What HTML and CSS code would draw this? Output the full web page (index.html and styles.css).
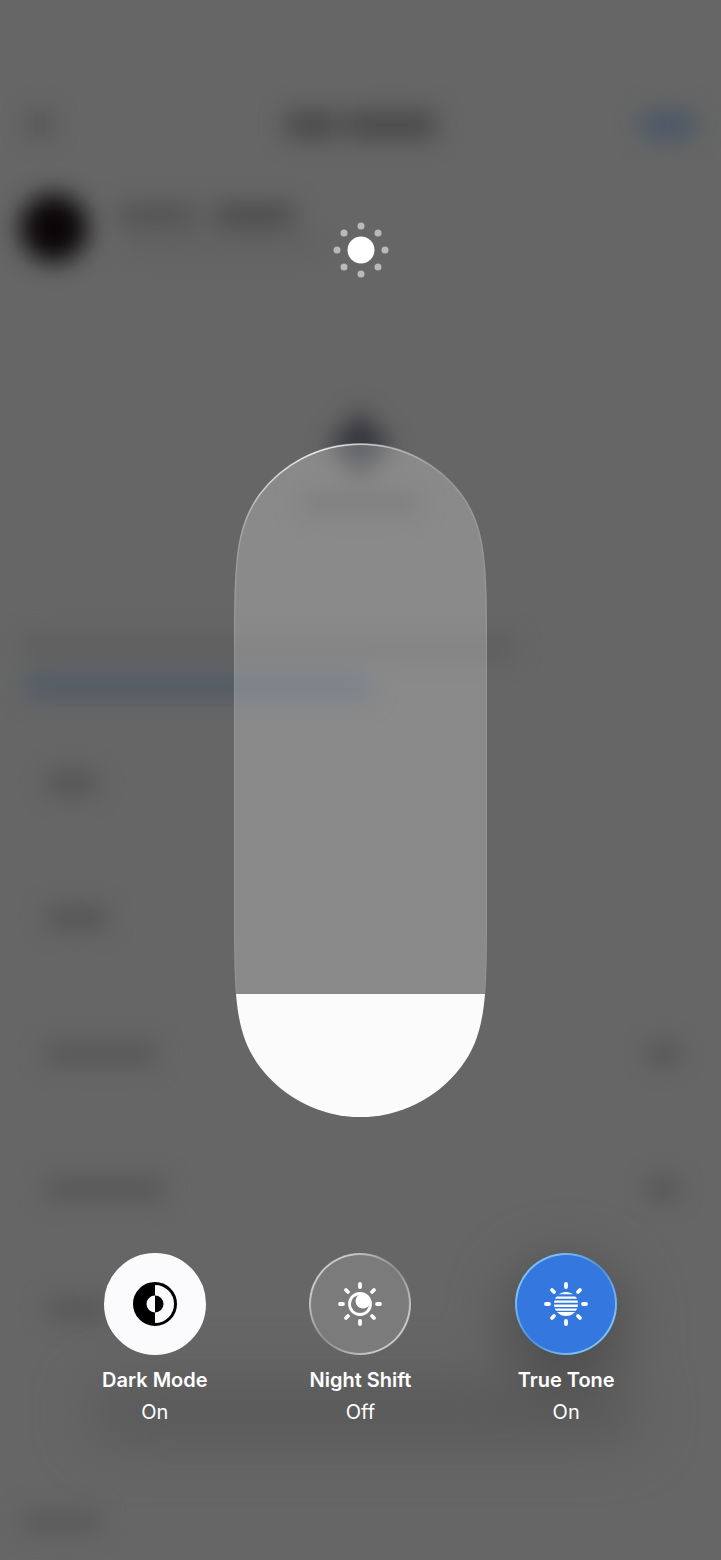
FILE: index.html
```html
<!DOCTYPE html>
<html lang="en">
<head>
    <meta charset="UTF-8">
    <meta name="viewport" content="width=device-width, initial-scale=1.0">
    <title>Display Brightness</title>
    <link rel="stylesheet" href="styles.css">
</head>
<body>

    <!-- blurred app behind the panel -->
    <svg class="backdrop" viewBox="0 0 721 1560" preserveAspectRatio="none" aria-hidden="true">
        <defs>
            <filter id="soft" x="-100%" y="-150%" width="300%" height="400%" color-interpolation-filters="sRGB"><feGaussianBlur stdDeviation="12"/></filter>
            <filter id="wide" x="-100%" y="-150%" width="300%" height="400%" color-interpolation-filters="sRGB"><feGaussianBlur stdDeviation="28"/></filter>
        </defs>
        <g filter="url(#soft)">
            <rect x="30" y="112" width="20" height="24" fill="#505050"/>
            <rect x="286" y="112" width="52" height="26" fill="#484848"/>
            <rect x="346" y="112" width="90" height="26" fill="#484848"/>
            <rect x="642" y="112" width="52" height="26" fill="#485667"/>
            <circle cx="54" cy="228" r="34" fill="#0a0607"/>
            <rect x="120" y="205" width="76" height="20" fill="#505050"/>
            <rect x="214" y="205" width="80" height="20" fill="#484848"/>
            <rect x="124" y="238" width="200" height="12" fill="#5e5e5e"/>
            <path d="M360 410l32 36-32 30-32-30z" fill="#35363c"/>
            <rect x="302" y="494" width="116" height="18" fill="#555"/>
            <rect x="24" y="638" width="490" height="18" fill="#5c5c5c"/>
            <rect x="26" y="675" width="344" height="22" fill="#505a67"/>
            <rect x="48" y="774" width="48" height="18" fill="#505050"/>
            <rect x="48" y="909" width="58" height="18" fill="#505050"/>
            <rect x="46" y="1045" width="110" height="18" fill="#545454"/>
            <rect x="650" y="1046" width="26" height="16" fill="#4c4c4c"/>
            <rect x="46" y="1180" width="118" height="18" fill="#545454"/>
            <rect x="650" y="1181" width="26" height="16" fill="#4c4c4c"/>
            <rect x="48" y="1300" width="60" height="18" fill="#545454"/>
            <rect x="24" y="1512" width="76" height="18" fill="#575757"/>
        </g>
        <g filter="url(#wide)">
            <rect x="90" y="1384" width="550" height="56" rx="28" fill="#585858"/>
            <circle cx="566" cy="1322" r="60" fill="#4e4e4e"/>
        </g>
    </svg>

    <main class="panel">
        <svg class="sun" viewBox="-28 -28 56 56" aria-hidden="true">
            <circle r="13.5" fill="#fff"/>
            <g fill="#b9b9b9">
                <circle cy="-24" r="3.5"/>
                <circle cx="17" cy="-17" r="3.5"/>
                <circle cx="24" r="3.5"/>
                <circle cx="17" cy="17" r="3.5"/>
                <circle cy="24" r="3.5"/>
                <circle cx="-17" cy="17" r="3.5"/>
                <circle cx="-24" r="3.5"/>
                <circle cx="-17" cy="-17" r="3.5"/>
            </g>
        </svg>

        <div class="slider">
            <input type="range" class="slider-input" aria-label="Brightness" min="0" max="674" value="123" style="--level: 123px" oninput="this.style.setProperty('--level', this.value + 'px')">
            <svg class="slider-rim" viewBox="0 0 253 674" aria-hidden="true">
                <defs>
                    <linearGradient id="rim" x1="0" y1="0" x2="1" y2="0">
                        <stop offset="0" stop-color="#fff" stop-opacity=".12"/>
                        <stop offset=".12" stop-color="#fff" stop-opacity=".6"/>
                        <stop offset=".35" stop-color="#fff" stop-opacity=".85"/>
                        <stop offset=".55" stop-color="#fff" stop-opacity=".6"/>
                        <stop offset=".8" stop-color="#fff" stop-opacity=".15"/>
                        <stop offset="1" stop-color="#fff" stop-opacity=".1"/>
                    </linearGradient>
                </defs>
                <path d="M.5 200C.5 116 2.500 82 26.5 50.5A126 126 0 0 1 226.5 50.5C250.5 82 252.5 116 252.5 200" fill="none" stroke="url(#rim)" stroke-width="1.5"/>
                <path d="M.5 200V474Q.5 520 2 550M252.5 200V474Q252.5 520 251 550" fill="none" stroke="#fff" stroke-opacity=".1"/>
            </svg>
        </div>

        <div class="toggles">
            <div class="toggle">
                <button class="round light" id="dark-mode" aria-labelledby="dark-mode-name" aria-pressed="true">
                    <svg class="icon" viewBox="-22 -22 44 44" aria-hidden="true">
                        <circle r="20.5" fill="none" stroke="#000" stroke-width="3"/>
                        <path d="M0-21A21 21 0 0 0 0 21V8.5A8.5 8.5 0 0 1 0-8.5z" fill="#000"/>
                        <path d="M0-8.5A8.5 8.5 0 0 1 0 8.5z" fill="#000"/>
                    </svg>
                </button>
                <span class="name" id="dark-mode-name">Dark Mode</span>
                <span class="state">On</span>
            </div>
            <div class="toggle">
                <button class="round glass" id="night-shift" aria-labelledby="night-shift-name" aria-pressed="false">
                    <svg class="icon" viewBox="-22 -22 44 44" aria-hidden="true">
                        <g id="rays" stroke="#fff" stroke-width="3.8" stroke-linecap="round">
                            <path d="M0-20V-17M0 17V20M-20 0H-17M17 0H20M-14-14L-12-12M12 12L14 14M-14 14L-12 12M12-12L14-14"/>
                        </g>
                        <circle r="10.5" fill="none" stroke="#fff" stroke-width="2.8"/>
                        <circle cx="3" cy="-3" r="7.5" fill="#fff"/>
                    </svg>
                </button>
                <span class="name" id="night-shift-name">Night Shift</span>
                <span class="state">Off</span>
            </div>
            <div class="toggle">
                <button class="round blue" id="true-tone" aria-labelledby="true-tone-name" aria-pressed="true">
                    <svg class="icon" viewBox="-22 -22 44 44" aria-hidden="true">
                        <clipPath id="disc"><circle r="12"/></clipPath>
                        <use href="#rays"/>
                        <path clip-path="url(#disc)" d="M-12-12H12V-9.8H-12zM-12-7.4H12V-5.2H-12zM-12-3.4H12V-1.2H-12zM-12 .6H12V3H-12zM-12 4.6H12V6.8H-12zM-12 8H12V12H-12z" fill="#fff"/>
                    </svg>
                </button>
                <span class="name" id="true-tone-name">True Tone</span>
                <span class="state">On</span>
            </div>
        </div>
    </main>

</body>
</html>
```
FILE: styles.css
```css
body {
    position: relative;
    min-height: 100vh;
    margin: 0;
    background-color: #666;
    color: #fff;
    font-family: Inter, "Liberation Sans", sans-serif;
}

.backdrop {
    position: absolute;
    top: 0;
    left: 0;
    width: 100%;
    height: 100%;
}

.panel {
    position: relative;
    display: flex;
    flex-direction: column;
    align-items: center;
    padding: 222px 52px 40px;
}

.sun {
    width: 56px;
    height: 56px;
}

/* brightness */
.slider {
    position: relative;
    width: 253px;
    height: 674px;
    margin-top: 165px;
}

.slider-input {
    display: block;
    width: 100%;
    height: 100%;
    margin: 0;
    appearance: none;
    writing-mode: vertical-lr;
    direction: rtl;
    background: linear-gradient(to top, #fbfbfb var(--level), rgba(255, 255, 255, 0.235) var(--level));
    clip-path: path("M0 200C0 116 2 82 26 50A126 126 0 0 1 227 50C251 82 253 116 253 200V474C253 558 251 592 227 624A126 126 0 0 1 26 624C2 592 0 558 0 474Z");
    cursor: pointer;
}

.slider-input::-webkit-slider-thumb {
    appearance: none;
    width: 1px;
    height: 1px;
    opacity: 0;
}

.slider-rim {
    position: absolute;
    top: 0;
    left: 0;
    width: 100%;
    height: 100%;
    pointer-events: none;
}

/* buttons */
.toggles {
    display: grid;
    grid-template-columns: repeat(3, 1fr);
    width: 100%;
    margin-top: 136px;
}

.toggle {
    display: flex;
    flex-direction: column;
    align-items: center;
    font-size: 20px;
    line-height: 32px;
}

.round {
    display: flex;
    align-items: center;
    justify-content: center;
    width: 102px;
    height: 102px;
    margin-bottom: 9px;
    padding: 0;
    border: 2px solid transparent;
    border-radius: 50%;
    cursor: pointer;
}

.light {
    background: #fbfbfd;
    border-color: #fbfbfd;
}

.glass {
    background: linear-gradient(#7b7b7b, #7b7b7b) padding-box, linear-gradient(135deg, #c8c8c8 20%, #8e8e8e 50%, #c8c8c8 80%) border-box;
}

.blue {
    background: linear-gradient(#3377df, #3377df) padding-box, linear-gradient(135deg, #7cc2f6 20%, #4f8fdc 50%, #7cc2f6 80%) border-box;
}

.icon {
    width: 44px;
    height: 44px;
}

.name {
    font-weight: 600;
}
```
